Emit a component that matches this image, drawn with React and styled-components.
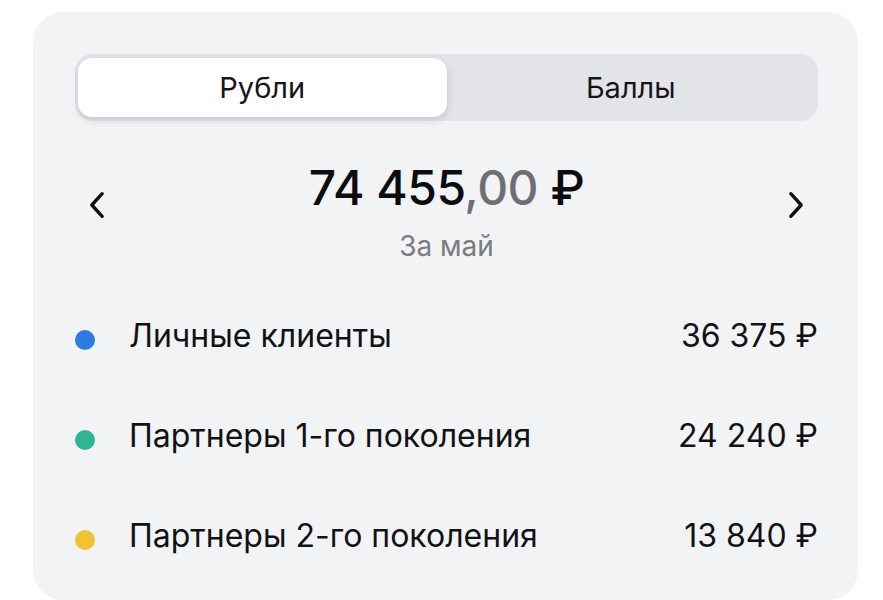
import styled, { createGlobalStyle } from "styled-components"
import { useState } from "react"

const Global = createGlobalStyle`
  body {
    margin: 0;
    background: #ffffff;
    font-family: Inter, "Noto Sans", "DejaVu Sans", sans-serif;
    color: #111114;
  }
`

const Card = styled.div`
  box-sizing: border-box;
  margin: 12px 0 0 33px;
  width: 825px;
  height: 588px;
  padding: 42px 40px 0 42px;
  background: #f2f3f5;
  border-radius: 30px;
`

const Segmented = styled.div`
  display: grid;
  grid-template-columns: 1fr 1fr;
  height: 67px;
  padding: 4px 3px;
  box-sizing: border-box;
  background: #e3e4e8;
  border-radius: 18px;
`

const Segment = styled.button`
  border: none;
  border-radius: 14px;
  font-family: inherit;
  font-size: 29px;
  font-weight: 400;
  color: #151518;
  cursor: pointer;
  background: ${({ $active }) => ($active ? "#ffffff" : "transparent")};
  box-shadow: ${({ $active }) =>
    $active ? "0 3px 8px rgba(0, 0, 0, 0.13)" : "none"};
`

const Summary = styled.div`
  display: grid;
  grid-template-columns: 30px 1fr 30px;
  align-items: start;
  margin-top: 38px;
`

const Arrow = styled.button`
  display: flex;
  align-items: center;
  justify-content: ${({ $side }) => ($side === "left" ? "flex-start" : "flex-end")};
  padding: ${({ $side }) => ($side === "left" ? "0 0 0 14px" : "0 14px 0 0")};
  height: 40px;
  border: none;
  background: none;
  cursor: pointer;
  margin-top: 26px;
`

const Center = styled.div`
  display: flex;
  flex-direction: column;
  align-items: center;
`

const Amount = styled.div`
  font-size: 48px;
  font-weight: 500;
  line-height: 58px;
  letter-spacing: -0.5px;
  color: #0d0d10;
`

const Cents = styled.span`
  color: #6f6f73;
`

const Period = styled.div`
  margin-top: 12px;
  font-size: 28px;
  line-height: 34px;
  color: #7a7b80;
`

const List = styled.ul`
  list-style: none;
  margin: 22px 0 0;
  padding: 0;
`

const Row = styled.li`
  display: flex;
  align-items: center;
  height: 100px;
  font-size: 32px;
`

const Dot = styled.span`
  width: 20px;
  height: 20px;
  border-radius: 50%;
  background: ${({ $color }) => $color};
  margin: 10px 34px 0 0;
  flex: none;
`

const Label = styled.span`
  flex: 1;
  color: #121215;
`

const Value = styled.span`
  color: #121215;
  white-space: nowrap;
`

const Chevron = ({ dir }) => (
  <svg width="17" height="28" viewBox="0 0 17 28" fill="none">
    <polyline
      points={dir === "left" ? "14,2 3,14 14,26" : "3,2 14,14 3,26"}
      stroke="#111"
      strokeWidth="3.6"
      strokeLinecap="round"
      strokeLinejoin="round"
    />
  </svg>
)

const rows = [
  { label: "Личные клиенты", value: "36 375 ₽", color: "#2b7be0" },
  { label: "Партнеры 1-го поколения", value: "24 240 ₽", color: "#2fb592" },
  { label: "Партнеры 2-го поколения", value: "13 840 ₽", color: "#f1c232" },
]

const App = () => {
  const [tab, setTab] = useState("rub")
  return (
    <>
      <Global />
      <Card>
        <Segmented>
          <Segment $active={tab === "rub"} onClick={() => setTab("rub")}>
            Рубли
          </Segment>
          <Segment $active={tab === "pts"} onClick={() => setTab("pts")}>
            Баллы
          </Segment>
        </Segmented>
        <Summary>
          <Arrow $side="left">
            <Chevron dir="left" />
          </Arrow>
          <Center>
            <Amount>
              74 455<Cents>,00</Cents> ₽
            </Amount>
            <Period>За май</Period>
          </Center>
          <Arrow $side="right">
            <Chevron dir="right" />
          </Arrow>
        </Summary>
        <List>
          {rows.map((r) => (
            <Row key={r.label}>
              <Dot $color={r.color} />
              <Label>{r.label}</Label>
              <Value>{r.value}</Value>
            </Row>
          ))}
        </List>
      </Card>
    </>
  )
}

export default App
